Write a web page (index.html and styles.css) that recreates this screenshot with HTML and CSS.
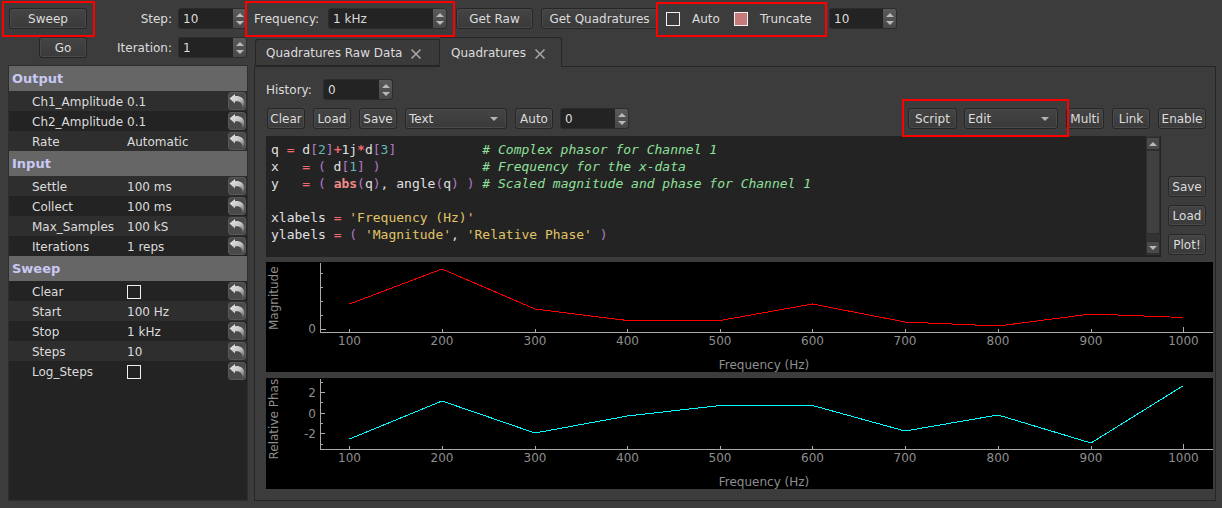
FILE: index.html
```html
<!DOCTYPE html>
<html lang="en">
<head>
<meta charset="utf-8">
<title>Quadratures</title>
<link rel="stylesheet" href="styles.css">
</head>
<body>
<svg class="defs" width="0" height="0" aria-hidden="true">
  <defs>
    <linearGradient id="undofill" x1="0.1" y1="0.1" x2="0.9" y2="0.95">
      <stop offset="0" stop-color="#e2e2e2"/>
      <stop offset="0.55" stop-color="#c4c4c4"/>
      <stop offset="1" stop-color="#626262"/>
    </linearGradient>
  </defs>
  <symbol id="undo" viewBox="0 0 16 16">
    <path d="M0.5 5.5 L6 1 L6 3.2 C10.5 2.6 14.8 4.6 15.4 9.5 C15.6 11.6 15 13.6 13.6 15.2 C13.6 12.4 12.6 9.6 9.8 8.6 C8.4 8.1 7.2 8 6 8.4 L6 10.4 Z" fill="url(#undofill)"/>
  </symbol>
  <symbol id="close" viewBox="0 0 12 12">
    <path d="M1.5 1.5 L10.5 10.5 M10.5 1.5 L1.5 10.5" stroke="#a8a8a8" stroke-width="1.5" fill="none"/>
  </symbol>
</svg>
<div class="app">
  <div class="left">
    <div class="left-row">
      <button class="btn btn-sweep">Sweep</button>
      <span class="label label-fill">Step:</span>
      <div class="spin spin-left"><span>10</span><i class="spin-btns"><b class="up"></b><b class="down"></b></i></div>
    </div>
    <div class="left-row">
      <button class="btn btn-go">Go</button>
      <span class="label label-fill">Iteration:</span>
      <div class="spin spin-left"><span>1</span><i class="spin-btns"><b class="up"></b><b class="down"></b></i></div>
    </div>
    <div class="tree">
      <div class="head">Output</div>
      <div class="row alt"><span class="name">Ch1_Amplitude</span><span class="val">0.1</span><span class="reset"><svg><use href="#undo"/></svg></span></div>
      <div class="row"><span class="name">Ch2_Amplitude</span><span class="val">0.1</span><span class="reset"><svg><use href="#undo"/></svg></span></div>
      <div class="row alt"><span class="name">Rate</span><span class="val">Automatic</span><span class="reset"><svg><use href="#undo"/></svg></span></div>
      <div class="head">Input</div>
      <div class="row alt"><span class="name">Settle</span><span class="val">100 ms</span><span class="reset"><svg><use href="#undo"/></svg></span></div>
      <div class="row"><span class="name">Collect</span><span class="val">100 ms</span><span class="reset"><svg><use href="#undo"/></svg></span></div>
      <div class="row alt"><span class="name">Max_Samples</span><span class="val">100 kS</span><span class="reset"><svg><use href="#undo"/></svg></span></div>
      <div class="row"><span class="name">Iterations</span><span class="val">1 reps</span><span class="reset"><svg><use href="#undo"/></svg></span></div>
      <div class="head">Sweep</div>
      <div class="row"><span class="name">Clear</span><span class="val"><i class="check"></i></span><span class="reset"><svg><use href="#undo"/></svg></span></div>
      <div class="row alt"><span class="name">Start</span><span class="val">100 Hz</span><span class="reset"><svg><use href="#undo"/></svg></span></div>
      <div class="row"><span class="name">Stop</span><span class="val">1 kHz</span><span class="reset"><svg><use href="#undo"/></svg></span></div>
      <div class="row alt"><span class="name">Steps</span><span class="val">10</span><span class="reset"><svg><use href="#undo"/></svg></span></div>
      <div class="row"><span class="name">Log_Steps</span><span class="val"><i class="check"></i></span><span class="reset"><svg><use href="#undo"/></svg></span></div>
    </div>
  </div>

  <div class="right">
    <div class="toolbar">
      <span class="label label-freq">Frequency:</span>
      <div class="spin spin-freq"><span>1 kHz</span><i class="spin-btns"><b class="up"></b><b class="down"></b></i></div>
      <button class="btn btn-raw">Get Raw</button>
      <button class="btn btn-quad">Get Quadratures</button>
      <i class="check check-auto"></i><span class="label label-auto">Auto</span>
      <i class="check check-on"></i><span class="label label-trunc">Truncate</span>
      <div class="spin spin-trunc"><span>10</span><i class="spin-btns"><b class="up"></b><b class="down"></b></i></div>
    </div>
    <div class="tabs">
      <div class="tab">Quadratures Raw Data<svg class="x"><use href="#close"/></svg></div>
      <div class="tab tab-on">Quadratures<svg class="x"><use href="#close"/></svg></div>
    </div>
    <div class="pane">
      <div class="hist">
        <span class="label label-hist">History:</span>
        <div class="spin spin-hist"><span>0</span><i class="spin-btns"><b class="up"></b><b class="down"></b></i></div>
      </div>
      <div class="tools">
        <button class="btn w38">Clear</button>
        <button class="btn w38">Load</button>
        <button class="btn w38">Save</button>
        <div class="combo combo-text"><span>Text</span><b class="drop"></b></div>
        <button class="btn w38">Auto</button>
        <div class="spin spin-auto"><span>0</span><i class="spin-btns"><b class="up"></b><b class="down"></b></i></div>
        <button class="btn btn-script">Script</button>
        <div class="combo combo-edit"><span>Edit</span><b class="drop"></b></div>
        <button class="btn w38">Multi</button>
        <button class="btn w38">Link</button>
        <button class="btn w48">Enable</button>
      </div>
      <div class="edit-row">
        <div class="editor">
<pre class="code">q <em class="o">=</em> d<em class="p">[</em><em class="n">2</em><em class="p">]</em><em class="b">+</em>1j<em class="b">*</em>d<em class="p">[</em><em class="n">3</em><em class="p">]</em>           <em class="c"># Complex phasor for Channel 1</em>
x   <em class="o">=</em> <em class="p">(</em> d<em class="p">[</em><em class="n">1</em><em class="p">]</em> <em class="p">)</em>             <em class="c"># Frequency for the x-data</em>
y   <em class="o">=</em> <em class="p">(</em> <em class="k">abs</em><em class="p">(</em>q<em class="p">)</em>, angle<em class="p">(</em>q<em class="p">)</em> <em class="p">)</em> <em class="c"># Scaled magnitude and phase for Channel 1</em>

xlabels <em class="o">=</em> <em class="s">'Frequency (Hz)'</em>
ylabels <em class="o">=</em> <em class="p">(</em> <em class="s">'Magnitude'</em>, <em class="s">'Relative Phase'</em> <em class="p">)</em></pre>
          <div class="scroll">
            <b class="sb-btn"><b class="up"></b></b>
            <b class="sb-thumb"></b>
            <b class="sb-btn"><b class="down"></b></b>
          </div>
        </div>
        <div class="side">
          <button class="btn w38">Save</button>
          <button class="btn w38">Load</button>
          <button class="btn w38">Plot!</button>
        </div>
      </div>
      <svg class="plot plot-a" viewBox="266 262 947 110">
        <g class="axis">
          <path d="M320.5 263V332.5H1213"/>
          <path d="M320 329.5h6M320 315.5h3M320 301.5h3M320 287.5h3M320 273.5h3"/>
          <path d="M349.5 332v-3M442.5 332v-3M535.5 332v-3M627.5 332v-3M720.5 332v-3M812.5 332v-3M905.5 332v-3M998.5 332v-3M1091.5 332v-3M1183.5 332v-5"/>
        </g>
        <polyline class="trace red" points="349.5,304 442,269 535,309 627.5,320.5 720,320.5 812.5,304 905,322 998,326 1091,314 1183.5,317.5"/>
        <g class="ticktext">
          <text x="349.5" y="345">100</text><text x="442" y="345">200</text><text x="535" y="345">300</text><text x="627.5" y="345">400</text><text x="720" y="345">500</text><text x="812.5" y="345">600</text><text x="905" y="345">700</text><text x="998" y="345">800</text><text x="1091" y="345">900</text><text x="1183.5" y="345">1000</text>
          <text x="764" y="369">Frequency (Hz)</text>
          <text class="end" x="316" y="333">0</text>
          <text class="rot" transform="translate(278 330) rotate(-90)">Magnitude</text>
        </g>
      </svg>
      <svg class="plot plot-b" viewBox="266 378 947 111">
        <g class="axis">
          <path d="M320.5 379V449.5H1213"/>
          <path d="M320 392.5h5M320 413.5h5M320 433.5h5M320 382.5h3M320 402.5h3M320 423.5h3M320 444.5h3"/>
          <path d="M349.5 449v-3M442.5 449v-3M535.5 449v-3M627.5 449v-3M720.5 449v-3M812.5 449v-3M905.5 449v-3M998.5 449v-3M1091.5 449v-3M1183.5 449v-5"/>
        </g>
        <polyline class="trace cyan" points="349.5,439 442,401 535,433 627.5,416 720,405.5 812.5,405.5 905,431 998,415 1091,443 1183.5,385.5"/>
        <g class="ticktext">
          <text x="349.5" y="462">100</text><text x="442" y="462">200</text><text x="535" y="462">300</text><text x="627.5" y="462">400</text><text x="720" y="462">500</text><text x="812.5" y="462">600</text><text x="905" y="462">700</text><text x="998" y="462">800</text><text x="1091" y="462">900</text><text x="1183.5" y="462">1000</text>
          <text x="764" y="486">Frequency (Hz)</text>
          <text class="end" x="316" y="397">2</text><text class="end" x="316" y="418">0</text><text class="end" x="316" y="438">-2</text>
          <text class="rot" transform="translate(278 459.5) rotate(-90)">Relative Phase</text>
        </g>
      </svg>
    </div>
  </div>
</div>
<i class="mark mark-sweep"></i>
<i class="mark mark-freq"></i>
<i class="mark mark-auto"></i>
<i class="mark mark-script"></i>
</body>
</html>
```

FILE: styles.css
```css
* { box-sizing: border-box; }
html, body { margin: 0; padding: 0; }
body {
  width: 1222px;
  height: 508px;
  overflow: hidden;
  background: #3c3c3c;
  color: #dcdcdc;
  font: 12px/15px "DejaVu Sans", sans-serif;
  position: relative;
}
.defs { position: absolute; }
i, em { font-style: normal; }
.app { display: flex; height: 508px; padding: 8px 6px 7px 8px; gap: 6px; }

.btn {
  height: 21px;
  padding: 1px 0 0;
  font: inherit;
  color: #dcdcdc;
  background: linear-gradient(#444444, #3a3a3a);
  border: 1px solid #262626;
  box-shadow: inset 0 0 0 1px #4a4a4a;
  border-radius: 3px;
  flex: none;
}
.w38 { width: 38px; }
.w48 { width: 48px; }
.label { flex: none; color: #dcdcdc; white-space: nowrap; padding-top: 2px; }

.spin {
  height: 21px;
  display: flex;
  align-items: center;
  justify-content: space-between;
  background: #232323;
  border-radius: 3px;
  padding-left: 4px;
  flex: none;
  border: 1px solid #2c2c2c;
}
.spin span, .combo span { padding-top: 2px; }
.spin-btns {
  width: 13px;
  height: 19px;
  background: linear-gradient(#5a5a5a, #484848);
  display: flex;
  flex-direction: column;
  align-items: center;
  justify-content: center;
  gap: 4px;
  border-radius: 0 2px 2px 0;
}
.up, .down, .drop { display: block; width: 0; height: 0; border-left: 4.5px solid transparent; border-right: 4.5px solid transparent; }
.up { border-bottom: 4px solid #b8b8b8; }
.down { border-top: 4px solid #b8b8b8; }
.drop { border-left-width: 4px; border-right-width: 4px; border-top: 4px solid #b4b4b4; }

.check { display: block; width: 14px; height: 14px; border: 1px solid #f0f0f0; flex: none; }
.check-on { background: #c77a7a; }

.left { width: 240px; flex: none; display: flex; flex-direction: column; gap: 8px; }
.left-row { display: flex; align-items: center; height: 21px; padding: 0 1px; }
.btn-sweep { width: 78px; }
.btn-go { width: 48px; margin-left: 30px; }
.label-fill { flex: 1; text-align: right; padding-right: 6px; }
.spin-left { width: 69px; }

.tree {
  flex: 1;
  margin-top: -1px;
  background: #232323;
  border: 1px solid #2e2e2e;
}
.head { height: 25px; background: #666666; color: #c9c9f4; font-weight: bold; font-size: 13px; line-height: 26px; padding-left: 3px; }
.row { height: 20px; display: flex; align-items: center; padding-left: 23px; }
.alt { background: #2e2e2e; }
.name { width: 95px; flex: none; white-space: nowrap; padding-top: 2px; }
.val { flex: 1; display: flex; white-space: nowrap; padding-top: 2px; }
.reset {
  width: 18px;
  height: 18px;
  margin-right: 1px;
  background: #4a4a4a;
  border: 1px solid #585858;
  border-radius: 3px;
  flex: none;
  display: block;
}
.reset svg { width: 16px; height: 16px; display: block; }

.right { flex: 1; display: flex; flex-direction: column; min-width: 0; }
.toolbar { height: 21px; display: flex; align-items: center; flex: none; }
.label-freq { width: 67px; }
.spin-freq { width: 119px; margin-left: 7px; }
.btn-raw { width: 77px; margin-left: 9px; }
.btn-quad { width: 117px; margin-left: 8px; }
.check-auto { margin-left: 8px; }
.label-auto { margin-left: 12px; width: 42px; }
.label-trunc { margin-left: 12px; width: 69px; }
.spin-trunc { width: 68px; }

.tabs { display: flex; height: 29px; flex: none; margin-top: 8px; align-items: flex-end; padding-left: 1px; position: relative; z-index: 1; }
.tab {
  height: 27px;
  width: 185px;
  padding: 2px 0 0 10px;
  display: flex;
  align-items: center;
  background: #3a3a3a;
  border: 1px solid #262626;
  border-radius: 3px 0 0 0;
  white-space: nowrap;
}
.tab-on {
  height: 30px;
  width: 122px;
  padding-left: 11px;
  background: #3c3c3c;
  border-bottom: 0;
  border-left: 0;
  border-radius: 0 3px 0 0;
  margin-bottom: -1px;
}
.x { width: 12px; height: 12px; margin-left: 8px; flex: none; }

.pane { flex: 1; border: 1px solid #262626; padding: 12px 0 0 11px; display: flex; flex-direction: column; }
.hist { display: flex; align-items: center; height: 21px; flex: none; }
.label-hist { width: 57px; }
.spin-hist { width: 70px; }
.tools { display: flex; height: 21px; margin-top: 8px; flex: none; padding-left: 1px; }
.tools > * { margin-right: 8px; }
.combo {
  height: 21px;
  flex: none;
  display: flex;
  align-items: center;
  justify-content: space-between;
  padding: 0 8px 0 3px;
  background: linear-gradient(#444444, #3a3a3a);
  border: 1px solid #262626;
  box-shadow: inset 0 0 0 1px #4a4a4a;
  border-radius: 3px;
}
.combo-text { width: 102px; }
.tools .spin-auto { width: 69px; margin-left: -1px; margin-right: 279px; }
.tools .btn-script { width: 49px; margin-right: 7px; }
.combo-edit { width: 94px; }

.edit-row { display: flex; height: 121px; margin-top: 7px; flex: none; }
.editor { width: 895px; flex: none; background: #232323; display: flex; padding: 0 1px 2px 5px; }
.code { flex: 1; margin: 5px 0 0; font: 13px/17px "DejaVu Sans Mono", monospace; color: #e0e0e0; white-space: pre; overflow: hidden; }
.o { color: #f2686e; }
.p { color: #b07cc6; }
.n { color: #66b8b8; }
.b { color: #f2686e; font-weight: bold; }
.k { color: #f08a8a; font-weight: bold; }
.c { color: #8fe09a; font-style: italic; }
.s { color: #e0c468; }

.scroll { width: 14px; flex: none; display: flex; flex-direction: column; background: #333333; padding-top: 1px; }
.sb-btn { height: 13px; flex: none; display: flex; align-items: center; justify-content: center; background: #4a4a4a; border: 1px solid #2e2e2e; }
.sb-thumb { height: 84px; margin-bottom: 7px; flex: none; background: #404040; border: 1px solid #2e2e2e; }

.side { display: flex; flex-direction: column; justify-content: flex-end; gap: 8px; padding: 0 0 2px 7px; }

.plot { display: block; width: 947px; flex: none; background: #000; }
.plot-a { height: 110px; margin-top: 5px; }
.plot-b { height: 111px; margin-top: 6px; }
.axis path { fill: none; stroke: #aaaaaa; stroke-width: 1; shape-rendering: crispEdges; }
.trace { fill: none; stroke-width: 1; shape-rendering: crispEdges; }
.red { stroke: #ff0000; }
.cyan { stroke: #00ffff; }
.ticktext text { fill: #8e8e8e; font: 12px "DejaVu Sans", sans-serif; text-anchor: middle; }
.ticktext .end { text-anchor: end; }
.ticktext .rot { text-anchor: start; }

.mark { position: absolute; border: 2px solid #ff0000; display: block; }
.mark-sweep { left: 2px; top: 1px; width: 93px; height: 36px; }
.mark-freq { left: 245px; top: 1px; width: 210px; height: 36px; }
.mark-auto { left: 656px; top: 2px; width: 171px; height: 35px; }
.mark-script { left: 902px; top: 99px; width: 167px; height: 38px; }
```
